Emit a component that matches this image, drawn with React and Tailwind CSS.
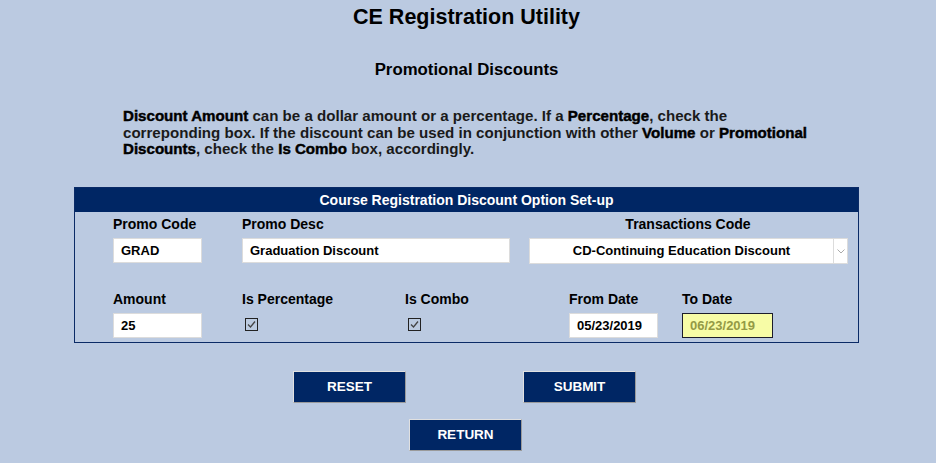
import React from "react";

function Check() {
  return (
    <div className="w-[13px] h-[13px] border border-[#222] bg-[#bccbe0] flex items-center justify-center mt-[5px] ml-[3px]">
      <svg width="11" height="11" viewBox="0 0 11 11">
        <path d="M2 5.5 L4.5 8 L9 2.5" fill="none" stroke="#444" strokeWidth="1.3" />
      </svg>
    </div>
  );
}

function Field({ value, w }) {
  return (
    <div
      className="h-[25px] bg-white border border-[#dcdcdc] flex items-center pl-[7px] text-[13px] font-bold text-black"
      style={{ width: w }}
    >
      {value}
    </div>
  );
}

function Btn({ children }) {
  return (
    <button className="w-[113px] h-[32px] shrink-0 bg-[#002664] text-white font-bold text-[13.5px] border border-t-[#e0e0e0] border-l-[#e0e0e0] border-r-[#9a9a9a] border-b-[#9a9a9a]">
      {children}
    </button>
  );
}

const B = ({ children }) => (
  <span className="text-black [-webkit-text-stroke:0.45px_#000]">{children}</span>
);

export default function App() {
  return (
    <div
      className="w-[936px] h-[463px] bg-[#bbcae1] text-black overflow-hidden"
      style={{ fontFamily: '"Liberation Sans", Arial, sans-serif' }}
    >
      <h1 className="text-center font-bold text-[21.5px] leading-[24px] pt-[5px] pr-[3px]">CE Registration Utility</h1>
      <h2 className="text-center font-bold text-[16.8px] leading-[20px] mt-[31px] pr-[3px]">Promotional Discounts</h2>
      <p className="ml-[123px] mt-[28px] text-[15.1px] leading-[16.7px] font-bold text-[#1a1a1a] whitespace-nowrap">
        <B>Discount Amount</B> can be a dollar amount or a percentage. If a <B>Percentage</B>, check the
        <br />
        correponding box. If the discount can be used in conjunction with other <B>Volume</B> or <B>Promotional</B>
        <br />
        <B>Discounts</B>, check the <B>Is Combo</B> box, accordingly.
      </p>

      <div className="ml-[74px] mt-[29px] w-[785px] h-[156px] border border-[#0a2a66]">
        <div className="h-[24px] bg-[#002664] text-white font-bold text-[14px] flex items-center justify-center">
          Course Registration Discount Option Set-up
        </div>
        <div className="pl-[38px] pt-[4px]">
          <div className="flex text-[14px] font-bold leading-[17px]">
            <div className="w-[129px]">Promo Code</div>
            <div className="w-[287px]">Promo Desc</div>
            <div className="w-[318px] text-center">Transactions Code</div>
          </div>
          <div className="flex mt-[5px]">
            <div className="w-[129px]"><Field value="GRAD" w={89} /></div>
            <div className="w-[287px]"><Field value="Graduation Discount" w={268} /></div>
            <div className="w-[319px] h-[26px] bg-white border border-[#dcdcdc] flex">
              <div className="flex-1 flex items-center justify-center text-[13px] font-bold">
                CD-Continuing Education Discount
              </div>
              <div className="w-[14px] border-l border-[#dcdcdc] flex items-center justify-center">
                <svg width="8" height="5" viewBox="0 0 8 5">
                  <path d="M0.5 0.5 L4 4 L7.5 0.5" fill="none" stroke="#aaa" strokeWidth="1" />
                </svg>
              </div>
            </div>
          </div>
          <div className="flex text-[14px] font-bold leading-[17px] mt-[27px]">
            <div className="w-[129px]">Amount</div>
            <div className="w-[163px]">Is Percentage</div>
            <div className="w-[164px]">Is Combo</div>
            <div className="w-[113px]">From Date</div>
            <div>To Date</div>
          </div>
          <div className="flex mt-[5px]">
            <div className="w-[129px]"><Field value="25" w={89} /></div>
            <div className="w-[163px]"><Check /></div>
            <div className="w-[164px]"><Check /></div>
            <div className="w-[113px]"><Field value="05/23/2019" w={89} /></div>
            <div>
              <div className="w-[91px] h-[25px] bg-[#f7fca6] border border-[#1c1c2c] flex items-center pl-[7px] text-[13px] font-bold text-[#949a45]">
                06/23/2019
              </div>
            </div>
          </div>
        </div>
      </div>

      <div className="flex gap-[117px] mt-[28px] ml-[293px]">
        <Btn>RESET</Btn>
        <Btn>SUBMIT</Btn>
      </div>
      <div className="flex mt-[16px] ml-[409px]">
        <Btn>RETURN</Btn>
      </div>
    </div>
  );
}
